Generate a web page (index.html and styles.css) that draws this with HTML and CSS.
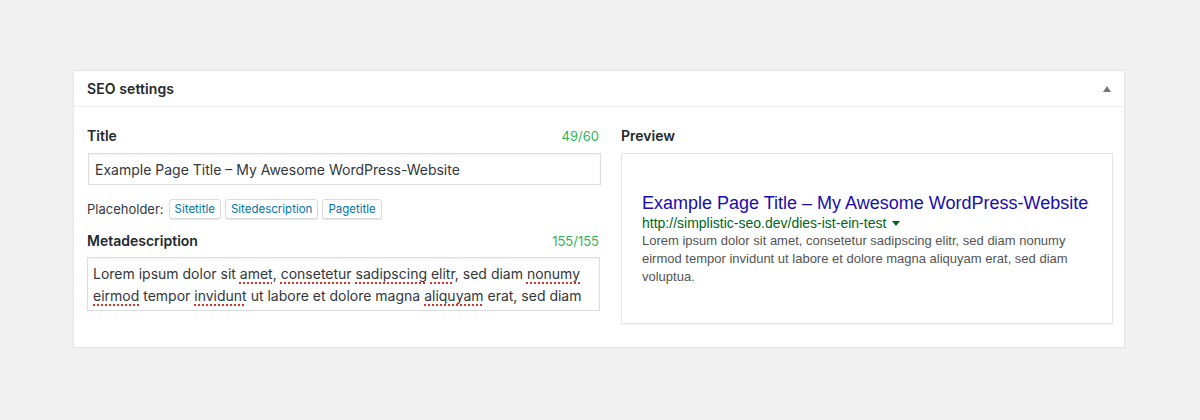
FILE: index.html
```html
<!DOCTYPE html>
<html lang="en">
<head>
<meta charset="utf-8">
<title>SEO settings</title>
<link rel="stylesheet" href="styles.css">
</head>
<body>
<div class="postbox">
  <div class="postbox-header">
    <h2 class="postbox-title">SEO settings</h2>
    <span class="toggle-arrow" aria-hidden="true">
      <svg width="8" height="6" viewBox="0 0 8 6"><polygon points="0,6 4,0 8,6" fill="#72777c"/></svg>
    </span>
  </div>
  <div class="inside">
    <div class="col col-fields">
      <div class="label-row">
        <span class="field-label">Title</span>
        <span class="counter">49/60</span>
      </div>
      <div class="text-input">Example Page Title – My Awesome WordPress-Website</div>
      <div class="placeholder-row">
        <span class="placeholder-label">Placeholder:</span>
        <span class="ph-button">Sitetitle</span>
        <span class="ph-button">Sitedescription</span>
        <span class="ph-button">Pagetitle</span>
      </div>
      <div class="label-row label-row-meta">
        <span class="field-label">Metadescription</span>
        <span class="counter">155/155</span>
      </div>
      <div class="text-area">
        <div class="ta-line">Lorem ipsum dolor sit <span class="spell">amet</span>, <span class="spell">consetetur</span> <span class="spell">sadipscing</span> <span class="spell">elitr</span>, sed diam <span class="spell">nonumy</span></div>
        <div class="ta-line"><span class="spell">eirmod</span> tempor <span class="spell">invidunt</span> ut labore et dolore magna <span class="spell">aliquyam</span> erat, sed diam</div>
      </div>
    </div>
    <div class="col col-preview">
      <div class="label-row">
        <span class="field-label">Preview</span>
      </div>
      <div class="preview-box">
        <div class="serp">
          <div class="serp-title">Example Page Title – My Awesome WordPress-Website</div>
          <div class="serp-url">http://simplistic-seo.dev/dies-ist-ein-test<span class="serp-caret"></span></div>
          <div class="serp-desc">Lorem ipsum dolor sit amet, consetetur sadipscing elitr, sed diam nonumy eirmod tempor invidunt ut labore et dolore magna aliquyam erat, sed diam voluptua.</div>
        </div>
      </div>
    </div>
  </div>
</div>
</body>
</html>
```

FILE: styles.css
```css
* { box-sizing: border-box; }

html, body {
  margin: 0;
  background: #f1f1f1;
}

body {
  padding: 70px 75px 0 73px;
  font-family: Inter, "Noto Sans", "Liberation Sans", sans-serif;
  color: #23282d;
  font-size: 14px;
}

.postbox {
  width: 1052px;
  background: #fff;
  border: 1px solid #e5e5e5;
  box-shadow: 0 1px 1px rgba(0, 0, 0, 0.04);
}

.postbox-header {
  height: 36px;
  display: flex;
  align-items: center;
  justify-content: space-between;
  padding: 0 13px 0 13px;
  border-bottom: 1px solid #eeeeee;
}

.postbox-title {
  margin: 0;
  font-size: 14px;
  font-weight: 600;
  line-height: 20px;
  color: #23282d;
  letter-spacing: 0.1px;
}

.toggle-arrow {
  display: flex;
  width: 8px;
  height: 6px;
  margin-top: 1px;
}

.inside {
  display: grid;
  grid-template-columns: 513px 492px;
  column-gap: 21px;
  padding: 19px 11px 23px 13px;
}

.col {
  display: flex;
  flex-direction: column;
}

.label-row {
  display: flex;
  justify-content: space-between;
  align-items: center;
  height: 20px;
  line-height: 20px;
}

.field-label {
  font-weight: 600;
  font-size: 14px;
  color: #23282d;
}

.counter {
  font-size: 13px;
  color: #2fb45a;
  padding-right: 1px;
}

.text-input {
  margin-top: 7px;
  height: 32px;
  border: 1px solid #dddddd;
  box-shadow: inset 0 1px 2px rgba(0, 0, 0, 0.07);
  padding: 0 6px;
  display: flex;
  align-items: center;
  color: #32373c;
  font-size: 14px;
  white-space: nowrap;
  margin-left: 1px;
  margin-right: -1px;
}

.placeholder-row {
  margin-top: 14px;
  display: flex;
  align-items: center;
  gap: 4px;
  height: 20px;
}

.placeholder-label {
  color: #32373c;
  font-size: 13px;
  margin-right: 1px;
}

.ph-button {
  height: 20px;
  display: inline-flex;
  align-items: center;
  padding: 0 5px;
  font-size: 11.5px;
  color: #0073aa;
  background: #fff;
  border: 1px solid #dcdcdc;
  border-radius: 3px;
  box-shadow: 0 1px 0 #e6e6e6;
}

.label-row-meta {
  margin-top: 12px;
}

.text-area {
  margin-top: 6px;
  height: 54px;
  overflow: hidden;
  border: 1px solid #dddddd;
  box-shadow: inset 0 1px 2px rgba(0, 0, 0, 0.07);
  padding: 5px 5px;
  color: #32373c;
  font-size: 14px;
  line-height: 22px;
}

.ta-line {
  white-space: nowrap;
}

.spell {
  text-decoration: underline dotted #e0302a;
  text-decoration-thickness: 2px;
  text-underline-offset: 3px;
}

.preview-box {
  margin-top: 7px;
  height: 171px;
  border: 1px solid #e5e5e5;
  box-shadow: 0 1px 1px rgba(0, 0, 0, 0.04);
  display: flex;
  align-items: center;
  padding: 0 20px;
  font-family: "Liberation Sans", Arial, sans-serif;
}

.serp {
  width: 100%;
}

.serp-title {
  font-size: 18px;
  line-height: 22px;
  color: #1a0dab;
  white-space: nowrap;
}

.serp-url {
  font-size: 14px;
  line-height: 18px;
  color: #006621;
  display: flex;
  align-items: center;
}

.serp-caret {
  display: inline-block;
  width: 0;
  height: 0;
  margin-left: 6px;
  margin-top: 2px;
  border-left: 4px solid transparent;
  border-right: 4px solid transparent;
  border-top: 5px solid #006621;
}

.serp-desc {
  font-size: 13px;
  line-height: 18px;
  color: #545454;
}
```
